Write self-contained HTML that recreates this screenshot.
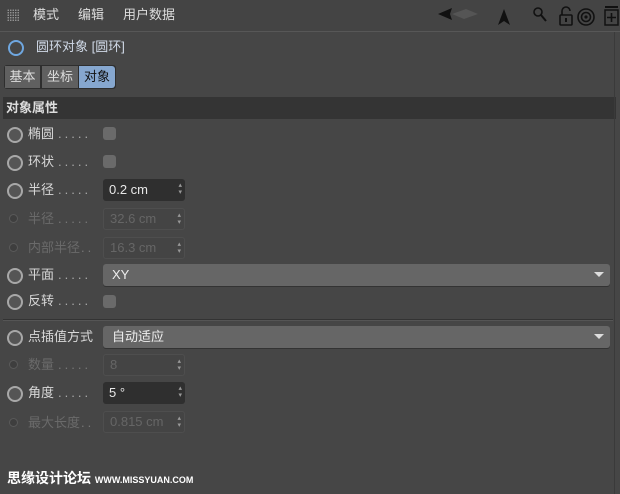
<html><head><style>
body{margin:0;width:620px;height:494px;background:#464646;font-family:"Liberation Sans","Noto Sans CJK SC",sans-serif;font-size:13px;color:#d8d8d8;position:relative;overflow:hidden}
.a{position:absolute}
.lbl{position:absolute;left:28px;white-space:nowrap;line-height:16px}
.dots{color:#aaa;letter-spacing:3px;margin-left:4px}
.rb{position:absolute;left:7px;width:12px;height:12px;border-radius:50%;border:2px solid #a8a8a8;background:#555;box-sizing:content-box}
.rb.s{left:9px;width:7px;height:7px;border:1px solid #5a5a5a;background:#3e3e3e}
.dis{color:#6a6a6a}
.fld{position:absolute;left:103px;width:82px;height:22px;border-radius:3px;box-sizing:border-box;padding-left:6px;line-height:22px}
.fld.on{background:#2f2f2f;color:#e8e8e8}
.fld.off{background:#444;border:1px solid #4e4e4e;color:#666;line-height:20px}
.fld:after{content:"\25B4\A\25BE";white-space:pre;position:absolute;right:3px;top:3px;font-size:7px;line-height:7px;color:#999}
.dd{position:absolute;left:103px;width:507px;height:22px;border-radius:3px;background:#666;box-shadow:0 1px 0 #333;padding-left:9px;box-sizing:border-box;line-height:22px;color:#eee}
.dd:after{content:"";position:absolute;right:6px;top:8px;border-left:5px solid transparent;border-right:5px solid transparent;border-top:5px solid #ddd}
.cb{position:absolute;left:103px;width:13px;height:13px;border-radius:3px;background:#6a6a6a}
</style></head><body>
<div class="a" style="left:0;top:0;width:620px;height:31px;background:#444;border-bottom:1px solid #575757"></div>
<div class="a" style="left:7px;top:9px;width:13px;height:13px;background:radial-gradient(circle,#999 0.6px,transparent 0.9px) 0 0/2.5px 2.5px"></div>
<div class="a" style="left:33px;top:7px;color:#ddd;line-height:16px">模式</div>
<div class="a" style="left:78px;top:7px;color:#ddd;line-height:16px">编辑</div>
<div class="a" style="left:123px;top:7px;color:#ddd;line-height:16px">用户数据</div>
<svg class="a" style="left:436px;top:4px" width="184" height="26">
<path d="M2 10 L16 4 L14 10 L16 16Z" fill="#111"/><path d="M16 10 L30 5 L42 10 L28 15Z" fill="#555"/>
<path d="M62 21 L68 5 L74 21 L68 17Z" fill="#111"/>
<circle cx="102" cy="8" r="4" fill="none" stroke="#111" stroke-width="1.6"/><line x1="105" y1="11" x2="110" y2="17" stroke="#111" stroke-width="2"/>
<rect x="124" y="11" width="12" height="10" rx="1" fill="none" stroke="#111" stroke-width="1.6"/><path d="M126 11 V7 a4 4 0 0 1 8 0" fill="none" stroke="#111" stroke-width="1.6"/><rect x="129" y="14" width="2" height="4" fill="#111"/>
<circle cx="150" cy="13" r="8" fill="none" stroke="#111" stroke-width="1.6"/><circle cx="150" cy="13" r="4.5" fill="none" stroke="#111" stroke-width="1.6"/><circle cx="150" cy="13" r="1.6" fill="#111"/>
<rect x="169" y="2" width="13" height="2" fill="#111"/><rect x="169" y="6" width="13" height="15" fill="none" stroke="#111" stroke-width="1.5"/><path d="M175.5 9 V18 M171 13.5 H180" stroke="#111" stroke-width="1.6"/>
</svg>
<div class="a" style="left:8px;top:40px;width:12px;height:12px;border:2px solid #6fa7e0;border-radius:50%"></div>
<div class="a" style="left:36px;top:39px;color:#cfd8e6;line-height:16px">圆环对象 [圆环]</div>
<div class="a" style="left:4px;top:65px;width:112px;height:24px;border-radius:3px;background:#2e2e2e"></div>
<div class="a" style="left:5px;top:66px;width:35px;height:22px;background:#606060;line-height:22px;text-align:center;color:#ddd">基本</div>
<div class="a" style="left:42px;top:66px;width:36px;height:22px;background:#606060;line-height:22px;text-align:center;color:#ddd">坐标</div>
<div class="a" style="left:79px;top:66px;width:36px;height:22px;background:#86a7cf;border-radius:0 3px 3px 0;line-height:22px;text-align:center;color:#111">对象</div>
<div class="a" style="left:3px;top:97px;width:610px;height:22px;background:#343434;line-height:22px;padding-left:3px;font-weight:bold;color:#ddd">对象属性</div>
<div class="a" style="left:614px;top:32px;width:1px;height:462px;background:#3a3a3a"></div>

<div class="rb" style="top:127px"></div><div class="lbl" style="top:126px">椭圆<span class="dots">.....</span></div><div class="cb" style="top:127px"></div>
<div class="rb" style="top:155px"></div><div class="lbl" style="top:154px">环状<span class="dots">.....</span></div><div class="cb" style="top:155px"></div>
<div class="rb" style="top:183px"></div><div class="lbl" style="top:182px">半径<span class="dots">.....</span></div><div class="fld on" style="top:179px">0.2 cm</div>
<div class="rb s" style="top:214px"></div><div class="lbl dis" style="top:211px">半径<span class="dots" style="color:#777">.....</span></div><div class="fld off" style="top:208px">32.6 cm</div>
<div class="rb s" style="top:243px"></div><div class="lbl dis" style="top:240px">内部半径<span class="dots" style="color:#777;margin-left:1px">..</span></div><div class="fld off" style="top:237px">16.3 cm</div>
<div class="rb" style="top:268px"></div><div class="lbl" style="top:267px">平面<span class="dots">.....</span></div><div class="dd" style="top:264px">XY</div>
<div class="rb" style="top:294px"></div><div class="lbl" style="top:293px">反转<span class="dots">.....</span></div><div class="cb" style="top:295px"></div>
<div class="a" style="left:3px;top:319px;width:610px;height:1px;background:#333;border-bottom:1px solid #555"></div>
<div class="rb" style="top:330px"></div><div class="lbl" style="top:329px">点插值方式</div><div class="dd" style="top:326px">自动适应</div>
<div class="rb s" style="top:360px"></div><div class="lbl dis" style="top:357px">数量<span class="dots" style="color:#777">.....</span></div><div class="fld off" style="top:354px">8</div>
<div class="rb" style="top:386px"></div><div class="lbl" style="top:385px">角度<span class="dots">.....</span></div><div class="fld on" style="top:382px">5 °</div>
<div class="rb s" style="top:418px"></div><div class="lbl dis" style="top:415px">最大长度<span class="dots" style="color:#777;margin-left:1px">..</span></div><div class="fld off" style="top:411px">0.815 cm</div>
<div class="a" style="left:7px;top:468px;font-size:14px;color:#fff;font-weight:bold">思缘设计论坛 <span style="font-size:9px;letter-spacing:0">WWW.MISSYUAN.COM</span></div>
</body></html>
